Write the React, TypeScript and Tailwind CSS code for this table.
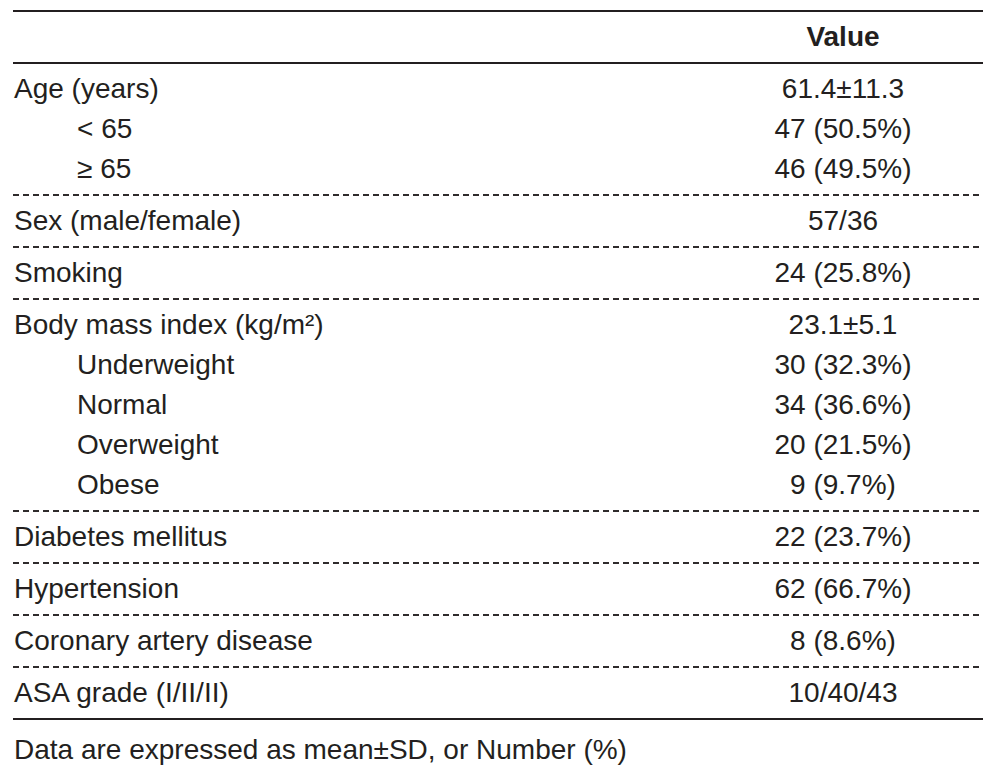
import React from "react"

type Group = { rows: { label: string; value: string; indent?: boolean }[] }

const groups: Group[] = [
  {
    rows: [
      { label: "Age (years)", value: "61.4±11.3" },
      { label: "< 65", value: "47 (50.5%)", indent: true },
      { label: "≥ 65", value: "46 (49.5%)", indent: true },
    ],
  },
  { rows: [{ label: "Sex (male/female)", value: "57/36" }] },
  { rows: [{ label: "Smoking", value: "24 (25.8%)" }] },
  {
    rows: [
      { label: "Body mass index (kg/m²)", value: "23.1±5.1" },
      { label: "Underweight", value: "30 (32.3%)", indent: true },
      { label: "Normal", value: "34 (36.6%)", indent: true },
      { label: "Overweight", value: "20 (21.5%)", indent: true },
      { label: "Obese", value: "9 (9.7%)", indent: true },
    ],
  },
  { rows: [{ label: "Diabetes mellitus", value: "22 (23.7%)" }] },
  { rows: [{ label: "Hypertension", value: "62 (66.7%)" }] },
  { rows: [{ label: "Coronary artery disease", value: "8 (8.6%)" }] },
  { rows: [{ label: "ASA grade (I/II/II)", value: "10/40/43" }] },
]

function Dashed() {
  return <div className="h-[2px] w-full bg-[linear-gradient(to_right,#2f2b2c_6px,transparent_6px)] bg-[length:10px_2px]" />
}

export default function App() {
  return (
    <div className="min-h-[774px] bg-white pt-[10px] pl-[13px] text-[#231f20] font-['Liberation_Sans',Arial,sans-serif] text-[28px] leading-[40px]">
      <div className="w-[970px]">
        <div className="h-[2px] bg-[#231f20]" />
        <div className="grid grid-cols-[1fr_280px] py-[5px]">
          <div />
          <div className="text-center font-bold">Value</div>
        </div>
        <div className="h-[2px] bg-[#231f20]" />
        {groups.map((g, gi) => (
          <div key={gi}>
            <div className="grid grid-cols-[1fr_280px] py-[5px]">
              <div className="pl-px">
                {g.rows.map((r, i) => (
                  <div key={i} className={r.indent ? "pl-[63px]" : ""}>
                    {r.label}
                  </div>
                ))}
              </div>
              <div className="text-center">
                {g.rows.map((r, i) => (
                  <div key={i}>{r.value}</div>
                ))}
              </div>
            </div>
            {gi < groups.length - 1 ? <Dashed /> : <div className="h-[2px] bg-[#231f20]" />}
          </div>
        ))}
        <div className="pt-[10px] pl-px">Data are expressed as mean±SD, or Number (%)</div>
      </div>
    </div>
  )
}
